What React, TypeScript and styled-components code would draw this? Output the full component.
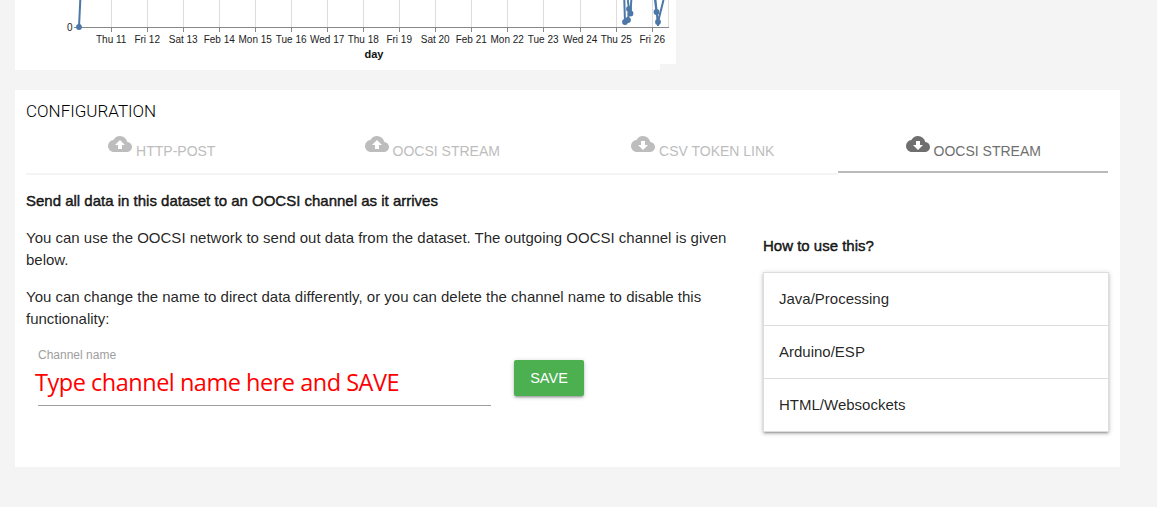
import React from 'react';
import styled, { createGlobalStyle } from 'styled-components';
import { MdCloudDownload, MdCloudUpload } from 'react-icons/md';

const GlobalStyle = createGlobalStyle`
  * { box-sizing: border-box; }
  body {
    margin: 0;
    background: #f4f4f4;
    color: rgba(0, 0, 0, 0.87);
    font: 15px/22px 'Liberation Sans', Arial, sans-serif;
    overflow: hidden;
  }
`;

const Page = styled.main`
  height: 507px;
  padding-left: 15px;
  overflow: hidden;
`;

const ChartCard = styled.section`
  width: 645px;
  height: 70px;
  background: #fff;
`;

const ChartSvg = styled.svg`
  display: block;
  width: 661px;
  height: 64px;
  overflow: visible;
  background: #fff;
`;

const AxisText = styled.text<{ $bold?: boolean; $anchor?: string }>`
  font: ${p => (p.$bold ? 'bold 11px' : '10px')} 'Liberation Sans', Arial, sans-serif;
  text-anchor: ${p => p.$anchor ?? 'middle'};
  fill: ${p => (p.$bold ? '#111' : '#222')};
`;

const ConfigCard = styled.section`
  width: 1105px;
  height: 377px;
  margin-top: 20px;
  padding: 9px 11px 0;
  background: #fff;
`;

const Title = styled.h1`
  margin: 0;
  font: 300 17px/25px Roboto, sans-serif;
  text-transform: uppercase;
  color: #000;
`;

const Tabs = styled.nav`
  display: flex;
  width: 1082px;
  height: 51px;
`;

const Tab = styled.a<{ $active?: boolean }>`
  display: flex;
  flex: 1;
  justify-content: center;
  gap: 4px;
  height: ${p => (p.$active ? 49 : 51)}px;
  padding: 8px 0 0 1px;
  border-bottom: 2px solid ${p => (p.$active ? '#bababa' : '#f4f4f4')};
  color: ${p => (p.$active ? '#6f6f6f' : '#bdbdbd')};
  svg { width: 24px; height: 24px; }
`;

const TabLabel = styled.span`
  padding-top: 8px;
  font-size: 14px;
`;

const Columns = styled.div`
  display: flex;
`;

const Main = styled.div`
  width: 737px;
  padding-top: 15px;
`;

const Strong = styled.p`
  margin: 0;
  -webkit-text-stroke: 0.5px currentColor;
`;

const Paragraph = styled.p`
  width: 715px;
  margin: 15px 0 0;
`;

const Form = styled.form`
  display: flex;
  gap: 23px;
  margin: 15px 0 0 12px;
`;

const Field = styled.label`
  display: block;
  width: 453px;
  height: 61px;
  border-bottom: 1px solid #9e9e9e;
`;

const FieldName = styled.span`
  display: block;
  font-size: 12px;
  line-height: 20px;
  color: #9e9e9e;
`;

const FieldHint = styled.span`
  display: block;
  margin: 1px 0 0 -3px;
  font: 23.5px/32px 'Open Sans', 'Noto Sans', sans-serif;
  letter-spacing: -0.48px;
  white-space: nowrap;
  color: #f00;
`;

const SaveButton = styled.button`
  width: 70px;
  height: 36px;
  margin-top: 15px;
  padding: 0;
  border: 0;
  border-radius: 2px;
  background: #4caf50;
  color: #fff;
  font: 14.5px/36px 'Liberation Sans', Arial, sans-serif;
  box-shadow: 0 2px 2px rgba(0, 0, 0, 0.14), 0 3px 1px -2px rgba(0, 0, 0, 0.12), 0 1px 5px rgba(0, 0, 0, 0.2);
`;

const Help = styled.aside`
  width: 346px;
  padding-top: 60px;
`;

const HelpList = styled.ul`
  margin: 15px 0 0;
  padding: 0;
  list-style: none;
  border: 1px solid #ddd;
  border-bottom: 0;
  box-shadow: 0 2px 2px rgba(0, 0, 0, 0.14), 0 3px 1px -2px rgba(0, 0, 0, 0.12), 0 1px 5px rgba(0, 0, 0, 0.2);
`;

const HelpItem = styled.li`
  height: 53px;
  padding: 15px;
  border-bottom: 1px solid #ddd;
`;

const days = [
  'Thu 11', 'Fri 12', 'Sat 13', 'Feb 14', 'Mon 15', 'Tue 16', 'Wed 17', 'Thu 18',
  'Fri 19', 'Sat 20', 'Feb 21', 'Mon 22', 'Tue 23', 'Wed 24', 'Thu 25', 'Fri 26',
];
const tickX = (i: number) => 96.5 + i * 36 + (i > 12 ? 1 : 0);
const points = [[64, 27], [610, 22], [613, 20], [614, 9], [615.5, 13.5], [641.5, 12], [643, 22]];

function Chart() {
  return (
    <ChartSvg viewBox="0 0 661 64">
      <g stroke="#ddd">
        {days.map((d, i) => <line key={d} x1={tickX(i)} x2={tickX(i)} y1={0} y2={27} />)}
        <line x1={653.5} x2={653.5} y1={0} y2={27} />
      </g>
      <g stroke="#888">
        <line x1={59} x2={654} y1={27.5} y2={27.5} />
        {days.map((d, i) => <line key={d} x1={tickX(i)} x2={tickX(i)} y1={27} y2={32} />)}
      </g>
      <g fill="none" stroke="#4c78a8" strokeWidth={2}>
        <path d="M64 27L65.3 0" />
        <path d="M609.3 0L610 22L613 20L614 9L612.8 0M616.3 0L615.5 13.5L614 9" />
        <path d="M640 0L641.5 12L643 22L648.5 0M640.5 0L643 26" />
      </g>
      {points.map(([x, y]) => <circle key={`${x}-${y}`} cx={x} cy={y} r={2.9} fill="#4c78a8" />)}
      <AxisText x={57.5} y={31} $anchor="end">0</AxisText>
      {days.map((d, i) => <AxisText key={d} x={tickX(i) - 0.3} y={43}>{d}</AxisText>)}
      <AxisText x={359} y={58} $bold>day</AxisText>
    </ChartSvg>
  );
}

const tabs = [
  { label: 'HTTP-POST', Icon: MdCloudUpload },
  { label: 'OOCSI STREAM', Icon: MdCloudUpload },
  { label: 'CSV TOKEN LINK', Icon: MdCloudDownload },
  { label: 'OOCSI STREAM', Icon: MdCloudDownload, active: true },
];

export default function App() {
  return (
    <>
      <GlobalStyle />
      <Page>
        <ChartCard><Chart /></ChartCard>
        <ConfigCard>
          <Title>Configuration</Title>
          <Tabs>
            {tabs.map(({ label, Icon, active }, i) => (
              <Tab key={i} $active={active}>
                <Icon />
                <TabLabel>{label}</TabLabel>
              </Tab>
            ))}
          </Tabs>
          <Columns>
            <Main>
              <Strong>Send all data in this dataset to an OOCSI channel as it arrives</Strong>
              <Paragraph>
                You can use the OOCSI network to send out data from the dataset. The outgoing OOCSI channel is given below.
              </Paragraph>
              <Paragraph>
                You can change the name to direct data differently, or you can delete the channel name to disable this functionality:
              </Paragraph>
              <Form>
                <Field>
                  <FieldName>Channel name</FieldName>
                  <FieldHint>Type channel name here and SAVE</FieldHint>
                </Field>
                <SaveButton type="button">SAVE</SaveButton>
              </Form>
            </Main>
            <Help>
              <Strong>How to use this?</Strong>
              <HelpList>
                <HelpItem>Java/Processing</HelpItem>
                <HelpItem>Arduino/ESP</HelpItem>
                <HelpItem>HTML/Websockets</HelpItem>
              </HelpList>
            </Help>
          </Columns>
        </ConfigCard>
      </Page>
    </>
  );
}
